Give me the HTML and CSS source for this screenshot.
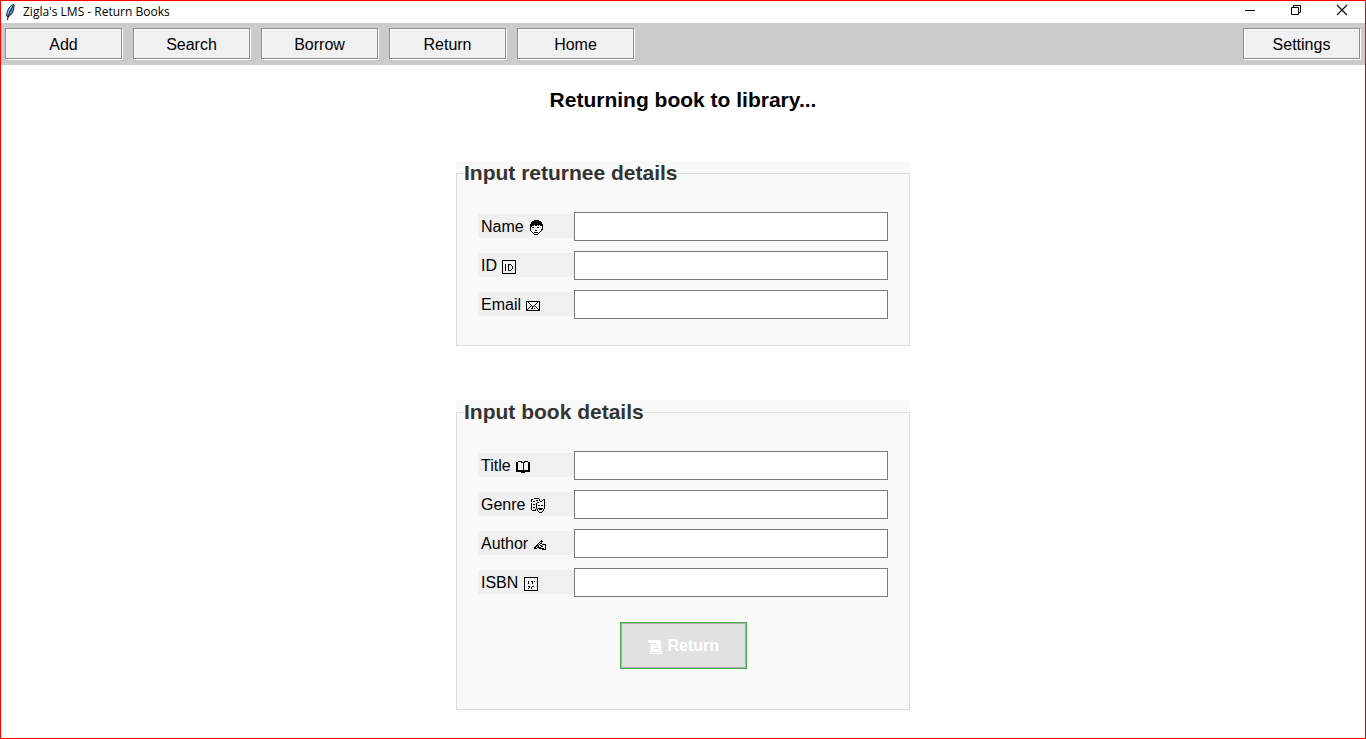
FILE: index.html
```html
<!DOCTYPE html>
<html lang="en">
<head>
<meta charset="utf-8">
<title>Zigla's LMS - Return Books</title>
<link rel="stylesheet" href="styles.css">
</head>
<body>
<div class="window">
  <header class="titlebar">
    <svg class="app-icon" width="11" height="17" viewBox="0 0 11 17" aria-hidden="true">
      <path d="M9 .5C5.500 1 2 5 1.500 12L3 13C7 11 9.500 6 9 .5Z" fill="#4b87c5" stroke="#1c2733"/>
      <path d="M8 2C5 6 3.500 10 2.500 16" fill="none" stroke="#111"/>
      <path d="M7 2C4.500 5 3.500 8 3 10" fill="none" stroke="#b5d3ee"/>
    </svg>
    <span class="app-title">Zigla's LMS - Return Books</span>
    <div class="window-controls">
      <button type="button" class="window-button" aria-label="Minimize"><svg width="12" height="12" viewBox="0 0 12 12"><path d="M1 6.500H11" stroke="#000"/></svg></button>
      <button type="button" class="window-button" aria-label="Restore"><svg width="12" height="12" viewBox="0 0 12 12"><path d="M1.500 3.500h7v7h-7zM3.500 3V1.500h7v7H9" fill="none" stroke="#000"/></svg></button>
      <button type="button" class="window-button" aria-label="Close"><svg width="12" height="12" viewBox="0 0 12 12"><path d="M1 1 11 11M11 1 1 11" stroke="#000" stroke-width="1.100"/></svg></button>
    </div>
  </header>
  <nav class="toolbar">
    <button type="button" class="tool">Add</button>
    <button type="button" class="tool">Search</button>
    <button type="button" class="tool">Borrow</button>
    <button type="button" class="tool">Return</button>
    <button type="button" class="tool">Home</button>
    <button type="button" class="tool tool-end">Settings</button>
  </nav>
  <main class="content">
    <h1 class="heading">Returning book to library...</h1>
    <form class="form">
      <div class="panel">
        <fieldset class="group">
          <legend class="legend">Input returnee details</legend>
          <div class="row">
            <label class="label" for="name">Name
              <svg class="icon" width="16" height="16" viewBox="0 0 16 16" aria-hidden="true">
                <path d="M5 1h6v1h2v1h1v2h1v6h-1v-4h-2v-1h-1v1h-1v-1h-1v1h-2v-1h-1v1h-2v1h-1v3h-1v-6h1v-2h1v-1h2z"/>
                <path d="M2 10h1v2h1v1h1v1h1v1h4v-1h1v-1h1v-1h1v-2h1v2h-1v1h-1v1h-1v1h-1v1h-4v-1h-1v-1h-1v-1h-1v-1h-1zM4 8h2v1h-2zM9 8h2v1h-2zM7 11h2v1h-2zM6 13h4v1h-4z"/>
              </svg></label>
            <input class="entry" type="text" id="name">
          </div>
          <div class="row">
            <label class="label" for="rid">ID
              <svg class="icon" width="16" height="16" viewBox="0 0 16 16" aria-hidden="true"><path d="M1 2h14v14H1zM2 3v12h12V3zM4 6h1v7H4zM7 6h3v1h1v1h1v3h-1v1h-1v1H7zM8 7v5h2v-1h1V8h-1V7z" fill-rule="evenodd"/></svg></label>
            <input class="entry" type="text" id="rid">
          </div>
          <div class="row">
            <label class="label" for="email">Email
              <svg class="icon" width="16" height="16" viewBox="0 0 16 16" aria-hidden="true"><path d="M1 4h14v10H1zM2 5v8h12V5z" fill-rule="evenodd"/><path d="M3 5h1v1H3zM4 6h1v1H4zM5 7h1v1H5zM6 8h1v1H6zM7 9h2v1H7zM9 8h1v1H9zM10 7h1v1h-1zM11 6h1v1h-1zM12 5h1v1h-1zM5 9h1v1H5zM4 10h1v1H4zM3 11h1v1H3zM2 12h1v1H2zM10 9h1v1h-1zM11 10h1v1h-1zM12 11h1v1h-1zM13 12h1v1h-1zM6 11h1v1H6zM7 10h1v2H7zM9 11h1v1H9z"/></svg></label>
            <input class="entry" type="text" id="email">
          </div>
        </fieldset>
      </div>
      <div class="panel">
        <fieldset class="group">
          <legend class="legend">Input book details</legend>
          <div class="row">
            <label class="label" for="title">Title
              <svg class="icon" width="16" height="16" viewBox="0 0 16 16" aria-hidden="true"><path d="M3 3h4v1h2V3h4v1h2v10h-5v1H6v-1H1V4h2zM3 4v8h4V5H6V4zM7 5v7h1V5zM9 5v7h4V4h-3v1z" fill-rule="evenodd"/></svg></label>
            <input class="entry" type="text" id="title">
          </div>
          <div class="row">
            <label class="label" for="genre">Genre
              <svg class="icon" width="16" height="16" viewBox="0 0 16 16" aria-hidden="true"><path d="M1 2h2v1H2v2H1zM4 1h5v1H4zM9 2h1v2H9zM10 4h2v1h-2zM12 3h1v1h-1zM13 2h2v8h-1V3h-1zM1 6h1v7H1zM3 4h2v1H3zM6 3h2v1H6zM3 7h2v1H3zM2 13h3v-1h1v2H2zM3 10h2v1H3zM6 6h1v6H6zM7 5h2v1H7zM8 8h2v1H8zM11 8h2v1h-2zM8 11h5v1H8zM9 12h3v1H9zM7 12h1v2H7zM8 14h1v1H8zM9 15h3v1H9zM12 14h1v1h-1zM13 12h1v2h-1zM14 10h1v2h-1z"/></svg></label>
            <input class="entry" type="text" id="genre">
          </div>
          <div class="row">
            <label class="label" for="author">Author
              <svg class="icon" width="16" height="16" viewBox="0 0 16 16" aria-hidden="true"><path d="M8 4h1v1H8zM7 5h3v1H7zM6 6h1v1H6zM8 6h1v1H8zM5 7h1v1H5zM7 7h1v1H7zM4 8h1v1H4zM6 8h1v1H6zM8 7h1v1H8zM9 8h4v1H9zM3 9h3v1H3zM7 9h2v1H7zM12 9h1v4h-1zM2 10h2v1H2zM5 10h1v1H5zM8 10h2v1H8zM1 11h2v1H1zM4 11h4v1H4zM1 12h3v1H1zM6 12h5v1H6zM9 13h4v1H9z"/></svg></label>
            <input class="entry" type="text" id="author">
          </div>
          <div class="row">
            <label class="label" for="isbn">ISBN
              <svg class="icon" width="16" height="16" viewBox="0 0 16 16" aria-hidden="true"><path d="M1 2h14v14H1zM2 3v12h12V3z" fill-rule="evenodd"/><path d="M5 6h1v3H5zM8 6h2v1H8zM9 7h1v2H9zM5 11h2v1H5zM6 12h1v1H6zM5 13h1v1H5zM8 12h1v2H8zM9 11h2v1H9zM11 6h1v1h-1z"/></svg></label>
            <input class="entry" type="text" id="isbn">
          </div>
          <button type="button" class="submit"><svg class="icon" width="16" height="16" viewBox="0 0 16 16" aria-hidden="true"><path d="M1 2h12v1h1v10h1v3h-1v1H4v-1H3v-3h1V5H2V4H1zM6 5v1h3V5zM6 7v1h6V7zM6 10v1h6v-1zM5 14v1h7v-1z" fill-rule="evenodd"/></svg> Return</button>
        </fieldset>
      </div>
    </form>
  </main>
</div>
</body>
</html>
```
FILE: styles.css
```css
* {
  box-sizing: border-box;
}

body {
  margin: 0;
  font-family: "Liberation Sans", Arial, sans-serif;
  font-size: 16px;
  color: #000;
  background: #fff;
}

button,
input {
  font: inherit;
  color: inherit;
}

.window {
  min-height: 100vh;
  border: 1px solid #f00;
}

.titlebar {
  display: flex;
  align-items: center;
  height: 22px;
  padding-left: 4px;
}

.app-title {
  margin-left: 7px;
  font-family: "Open Sans", "Segoe UI", sans-serif;
  font-size: 12px;
  line-height: 20px;
}

.window-controls {
  display: flex;
  align-self: flex-start;
  margin-left: auto;
}

.window-button {
  display: flex;
  align-items: center;
  justify-content: center;
  width: 46px;
  height: 18px;
  padding: 0;
  border: 0;
  background: none;
}

.toolbar {
  display: flex;
  gap: 11px;
  padding: 5px 5px 6px 4px;
  background: #cbcbcb;
}

.tool {
  width: 117px;
  height: 31px;
  padding: 2px 0 0;
  border: 1px solid #8f8f8f;
  background: #f0f0f0;
  box-shadow: 1px 1px 0 #fff, inset 1px 1px 0 #fff;
}

.tool-end {
  margin-left: auto;
}

.content {
  display: flex;
  flex-direction: column;
  align-items: center;
  padding: 23px 16px 26px;
}

.heading {
  margin: 0 0 49px;
  font-size: 21px;
  line-height: 24px;
}

.form {
  display: flex;
  flex-direction: column;
  gap: 54px;
}

.panel {
  background: #f9f9f9;
}

.group {
  margin: 0;
  padding: 27px 21px 26px;
  border: 1px solid #dcdcdc;
}

.legend {
  margin-left: -14px;
  padding: 0;
  color: #333;
  font-size: 21px;
  font-weight: bold;
  line-height: 24px;
}

.row {
  display: flex;
  align-items: flex-start;
  margin-bottom: 10px;
}

.label {
  width: 96px;
  height: 24px;
  margin-top: 2px;
  padding-left: 3px;
  background: #f0f0f0;
  line-height: 25px;
}

.icon {
  vertical-align: -3px;
  fill: currentColor;
  shape-rendering: crispEdges;
}

.entry {
  width: 314px;
  height: 29px;
  padding: 0 6px;
  border: 1px solid #7a7a7a;
  background: #fff;
}

.row:last-child {
  margin-bottom: 0;
}

.submit {
  display: block;
  width: 127px;
  height: 47px;
  margin: 25px auto 14px;
  padding: 0;
  border: 1px solid #4caf50;
  background: #e1e1e1;
  box-shadow: inset 0 0 0 1px #adadad;
  color: #fff;
  font-weight: bold;
}
```
